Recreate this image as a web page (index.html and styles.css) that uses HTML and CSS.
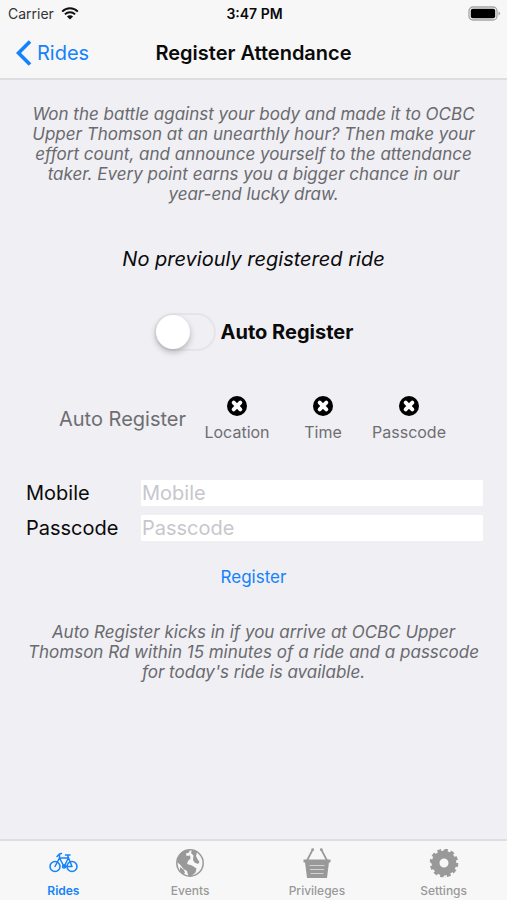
FILE: index.html
```html
<!DOCTYPE html>
<html lang="en">
<head>
    <meta charset="UTF-8">
    <meta name="viewport" content="width=device-width, initial-scale=1.0">
    <title>Register Attendance</title>
    <link rel="stylesheet" href="styles.css">
</head>
<body>
    <header class="top-bar">
        <div class="status-bar">
            <div class="carrier">
                <span>Carrier</span>
                <svg width="18" height="13" viewBox="0 0 18 13" aria-hidden="true">
                    <path d="M1.2 4.6a11 11 0 0 1 15.6 0M3.9 7.4a7.2 7.2 0 0 1 10.2 0" fill="none" stroke="#111" stroke-width="2"/>
                    <path d="M9 12.6 5.9 9.5a4.4 4.4 0 0 1 6.2 0z" fill="#111"/>
                </svg>
            </div>
            <span class="clock">3:47 PM</span>
            <div class="battery">
                <svg width="33" height="15" viewBox="0 0 33 15" aria-hidden="true">
                    <rect x="1" y="1" width="28" height="13" rx="4" fill="none" stroke="#a5a5a5" stroke-width="1.3"/>
                    <rect x="2.8" y="2.8" width="24.4" height="9.4" rx="2" fill="#000"/>
                    <path d="M30.5 5.5q1.600.6 1.600 2t-1.600 2z" fill="#a5a5a5"/>
                </svg>
            </div>
        </div>
        <nav class="nav-bar">
            <a class="back" href="#rides">
                <svg width="16" height="26" viewBox="0 0 16 26" aria-hidden="true">
                    <path d="M14 1.5 2.5 13 14 24.5" fill="none" stroke="currentColor" stroke-width="3.6"/>
                </svg>
                <span>Rides</span>
            </a>
            <h1>Register Attendance</h1>
        </nav>
    </header>

    <main class="content">
        <p class="note">Won the battle against your body and made it to OCBC Upper Thomson at an unearthly hour? Then make your effort count, and announce yourself to the attendance taker. Every point earns you a bigger chance in our year-end lucky draw.</p>
        <p class="last-ride">No previouly registered ride</p>

        <div class="auto-row">
            <input class="switch" type="checkbox" id="auto-register">
            <label for="auto-register">Auto Register</label>
        </div>

        <div class="checks">
            <span class="checks-title">Auto Register</span>
            <div class="check">
                <svg width="20" height="20" viewBox="0 0 20 20" aria-hidden="true">
                    <circle cx="10" cy="10" r="10" fill="#000"/>
                    <path d="M6.7 6.7l6.6 6.6M13.3 6.7l-6.6 6.6" stroke="#fff" stroke-width="4" stroke-linecap="round"/>
                </svg>
                <span>Location</span>
            </div>
            <div class="check">
                <svg width="20" height="20" viewBox="0 0 20 20" aria-hidden="true">
                    <circle cx="10" cy="10" r="10" fill="#000"/>
                    <path d="M6.7 6.7l6.6 6.6M13.3 6.7l-6.6 6.6" stroke="#fff" stroke-width="4" stroke-linecap="round"/>
                </svg>
                <span>Time</span>
            </div>
            <div class="check">
                <svg width="20" height="20" viewBox="0 0 20 20" aria-hidden="true">
                    <circle cx="10" cy="10" r="10" fill="#000"/>
                    <path d="M6.7 6.7l6.6 6.6M13.3 6.7l-6.6 6.6" stroke="#fff" stroke-width="4" stroke-linecap="round"/>
                </svg>
                <span>Passcode</span>
            </div>
        </div>

        <form class="register-form">
            <div class="fields">
                <label for="mobile">Mobile</label>
                <input type="tel" id="mobile" placeholder="Mobile">
                <label for="passcode">Passcode</label>
                <input type="text" id="passcode" placeholder="Passcode">
            </div>
            <button class="register-btn" type="button">Register</button>
        </form>

        <p class="note">Auto Register kicks in if you arrive at OCBC Upper Thomson Rd within 15 minutes of a ride and a passcode for today's ride is available.</p>
    </main>

    <nav class="tab-bar">
        <a class="tab active" href="#rides">
            <svg width="30" height="30" viewBox="0 0 30 30" aria-hidden="true">
                <g fill="none" stroke="currentColor" stroke-width="1.5" stroke-linecap="round" stroke-linejoin="round">
                    <circle cx="7" cy="18.500" r="5"/>
                    <circle cx="24" cy="18.500" r="5"/>
                    <path d="M7 18.500 11.500 10H20.500L16 18.500 11.500 10M20.500 10 24 18.500H16M11.500 10V6.500M9 8.500 11.500 6 13.500 5.500M20.500 10 19.500 7M17.500 7H22"/>
                    <circle cx="16" cy="18.500" r="1.500"/>
                </g>
            </svg>
            <span>Rides</span>
        </a>
        <a class="tab" href="#events">
            <svg width="30" height="30" viewBox="0 0 30 30" aria-hidden="true">
                <circle cx="15" cy="15" r="13.2" fill="none" stroke="currentColor" stroke-width="1.5"/>
                <path d="M2 14C2.500 8 6 4 11 2.500L15 2l-1 2.500-3 1 .5 2.500L15 7.500l.5 3L13 13l-1 3 5 1.500 4.500 3-1 4-4 3.500h-3L12 23l-3.500-2L5 16.500z" fill="currentColor"/>
                <path d="M17 2l5 2-1 4 1.500 3 2 3-1.500 2-3.500-1.500L18 12l.5-4.500L16 5zM5 19l4 3 1 3-2 1-3-3.500z" fill="currentColor"/>
            </svg>
            <span>Events</span>
        </a>
        <a class="tab" href="#privileges">
            <svg width="30" height="30" viewBox="0 0 30 30" aria-hidden="true">
                <path d="M5 12.500 10.500 2M25 12.500 19.500 2" fill="none" stroke="currentColor" stroke-width="1.7"/>
                <circle cx="10.700" cy="1.700" r="1.400" fill="currentColor"/>
                <circle cx="19.300" cy="1.700" r="1.400" fill="currentColor"/>
                <rect x="1.500" y="11.500" width="27" height="3" fill="currentColor"/>
                <path d="M3 14h24l-2 16H5z" fill="currentColor"/>
                <path d="M7.500 17.500h15M8 21.500h14M8.500 25.500h13" stroke="#d2d2d2" stroke-width="1"/>
            </svg>
            <span>Privileges</span>
        </a>
        <a class="tab" href="#settings">
            <svg width="30" height="30" viewBox="0 0 30 30" aria-hidden="true">
                <circle cx="15" cy="15" r="8.400" fill="none" stroke="currentColor" stroke-width="7.800"/>
                <circle cx="15" cy="15" r="12.900" fill="none" stroke="currentColor" stroke-width="2.800" pathLength="48" stroke-dasharray="2.300 1.700"/>
            </svg>
            <span>Settings</span>
        </a>
    </nav>
</body>
</html>
```
FILE: styles.css
```css
*{
    box-sizing: border-box;
}
body{
    font-family: Inter, "Liberation Sans", Arial, sans-serif;
    margin: 0;
    min-height: 100vh;
    display: flex;
    flex-direction: column;
    background-color: #efeff4;
    color: #0a0a0a;
}
a{
    text-decoration: none;
}
svg{
    display: block;
    flex: none;
}

/* top bar */
.top-bar{
    background-color: #f7f7f8;
    border-bottom: 2px solid #dedee2;
}
.status-bar{
    display: grid;
    grid-template-columns: 1fr auto 1fr;
    align-items: center;
    height: 27px;
    padding: 0 6px 0 8px;
    font-size: 14px;
}
.carrier{
    display: flex;
    align-items: center;
    gap: 7px;
    color: #333;
}
.clock{
    font-weight: 600;
}
.battery{
    justify-self: end;
}
.nav-bar{
    display: grid;
    grid-template-columns: 1fr auto 1fr;
    align-items: center;
    height: 51px;
    padding: 0 16px;
}
.back{
    display: flex;
    align-items: center;
    gap: 5px;
    color: #1482fa;
    font-size: 20px;
}
h1{
    margin: 0;
    font-size: 20px;
    font-weight: 600;
}

/* page content */
.content{
    flex: 1;
    padding: 24px;
}
.note{
    margin: 0;
    color: #6a6a6e;
    font-size: 17px;
    font-style: italic;
    line-height: 20px;
    text-align: center;
}
.last-ride{
    margin: 43px 0 42px;
    font-size: 20px;
    font-style: italic;
    line-height: 24px;
    text-align: center;
}
.auto-row{
    display: flex;
    justify-content: center;
    align-items: center;
    gap: 5px;
    font-size: 20px;
    font-weight: 700;
}
.switch{
    appearance: none;
    display: flex;
    align-items: center;
    width: 62px;
    height: 38px;
    margin: 0;
    border: 2px solid #e5e5e9;
    border-radius: 19px;
    cursor: pointer;
}
.switch::before{
    content: "";
    width: 34px;
    height: 34px;
    border-radius: 50%;
    background-color: white;
    box-shadow: 0 3px 6px rgba(0, 0, 0, 0.25);
}
.switch:checked{
    background-color: #4cd964;
    justify-content: flex-end;
}
.checks{
    display: flex;
    justify-content: center;
    align-items: center;
    margin-top: 45px;
    padding-left: 4px;
    color: #6e6e72;
}
.checks-title{
    margin-right: 8px;
    font-size: 20px;
}
.check{
    display: flex;
    flex-direction: column;
    align-items: center;
    gap: 6px;
    width: 86px;
    font-size: 16px;
    line-height: 20px;
}
.register-form{
    display: flex;
    flex-direction: column;
    align-items: center;
    margin: 38px 0 34px;
}
.fields{
    display: grid;
    grid-template-columns: 117px 1fr;
    row-gap: 9px;
    width: 100%;
    font-size: 20px;
    line-height: 26px;
}
.fields label{
    padding-left: 2px;
}
.fields input{
    width: 100%;
    height: 26px;
    padding: 0 1px;
    border: none;
    border-radius: 0;
    background-color: white;
    font: inherit;
}
.fields input::placeholder{
    color: #c7c7cc;
}
.register-btn{
    margin-top: 25px;
    padding: 0;
    border: none;
    background: none;
    color: #1482fa;
    font: inherit;
    font-size: 17px;
    line-height: 22px;
    cursor: pointer;
}

/* tab bar */
.tab-bar{
    display: grid;
    grid-template-columns: repeat(4, 1fr);
    height: 61px;
    border-top: 2px solid #dedee2;
    background-color: #f7f7f8;
}
.tab{
    display: flex;
    flex-direction: column;
    align-items: center;
    gap: 6px;
    padding-top: 7px;
    color: #999;
    font-size: 12px;
    font-weight: 500;
    line-height: 14px;
}
.tab.active{
    color: #1482fa;
    font-weight: 600;
}
```
